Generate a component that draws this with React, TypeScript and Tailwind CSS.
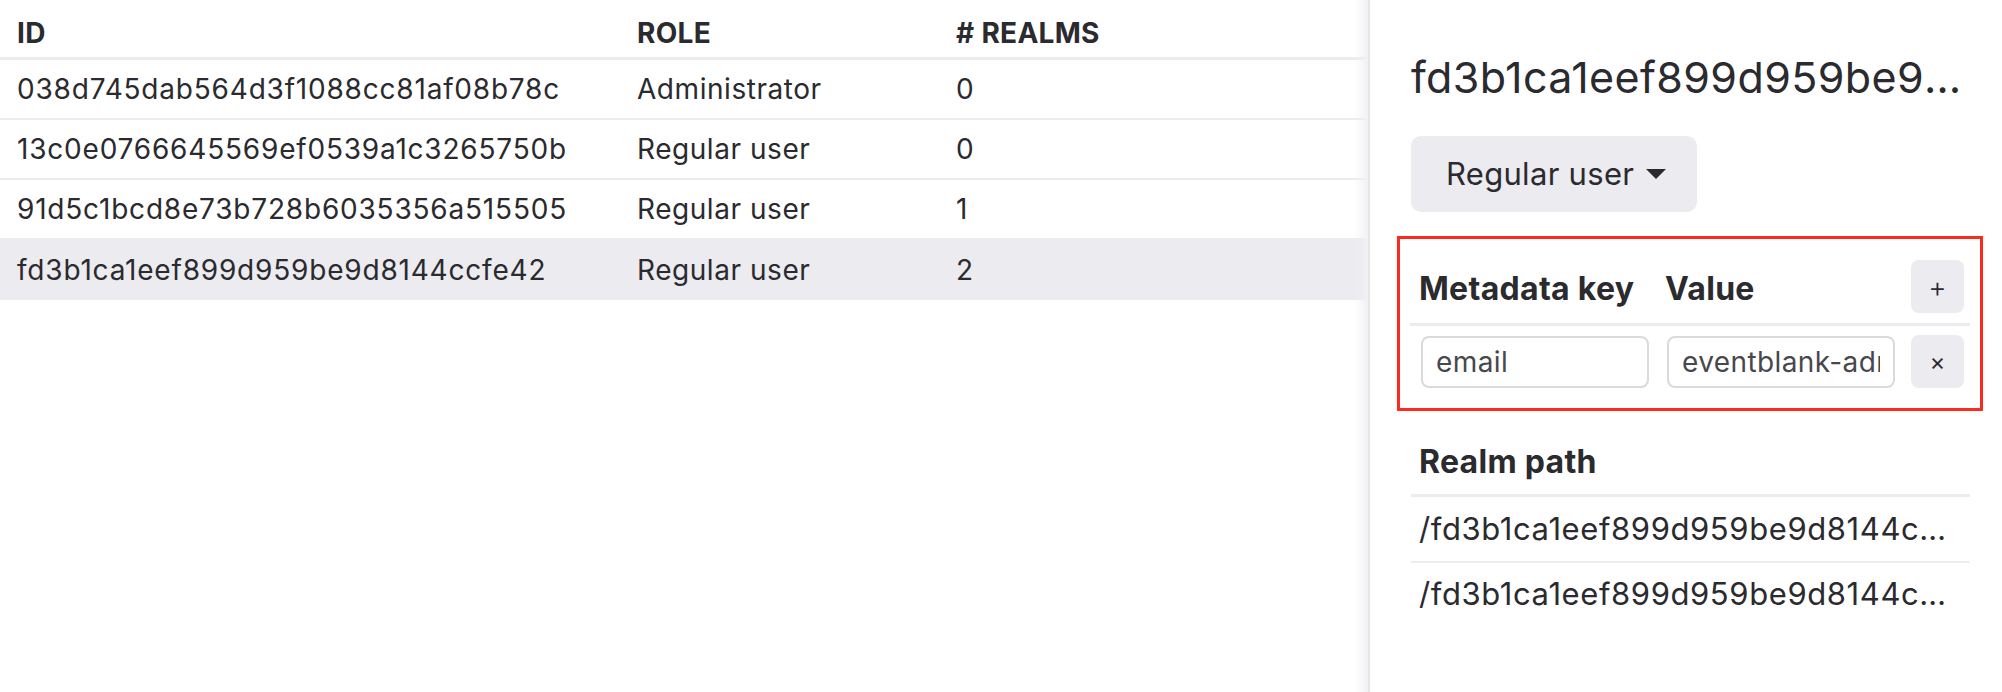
import React from "react";

const rows = [
  { id: "038d745dab564d3f1088cc81af08b78c", role: "Administrator", realms: "0" },
  { id: "13c0e0766645569ef0539a1c3265750b", role: "Regular user", realms: "0" },
  { id: "91d5c1bcd8e73b728b6035356a515505", role: "Regular user", realms: "1" },
  { id: "fd3b1ca1eef899d959be9d8144ccfe42", role: "Regular user", realms: "2", selected: true },
];

export default function App() {
  return (
    <div
      className="flex h-[692px] w-[2002px] bg-white text-[#2a2a2f] overflow-hidden"
      style={{ fontFamily: "Inter, 'Noto Sans', sans-serif" }}
    >
      {/* Left table */}
      <div className="relative w-[1368px] shrink-0">
        <div className="grid h-[60px] grid-cols-[637px_319px_1fr] items-end border-b-[3px] border-[#ebebf0] pb-[7px] text-[28px] leading-[34px] font-bold tracking-[0.3px]">
          <div className="pl-[17px]">ID</div>
          <div>ROLE</div>
          <div>#&nbsp;REALMS</div>
        </div>
        {rows.map((r) => (
          <div
            key={r.id}
            className={
              "grid h-[60px] grid-cols-[637px_319px_1fr] items-center text-[28px] " +
              (r.selected ? "bg-[#ebebf0]" : "border-b-2 border-[#ebebf0]")
            }
          >
            <div className="pl-[17px] tracking-[0.8px]">{r.id}</div>
            <div className="tracking-[0.55px]">{r.role}</div>
            <div>{r.realms}</div>
          </div>
        ))}
        <div className="absolute right-0 top-0 h-full w-[14px] bg-gradient-to-r from-transparent to-[#f1f1f4]" />
      </div>
      <div className="w-[2px] shrink-0 bg-[#e6e6ea]" />

      {/* Right panel */}
      <div className="min-w-0 flex-1 pl-[41px] pt-[51px]">
        <div className="w-[559px] truncate text-[43px] leading-[52px] tracking-[0.4px]">
          fd3b1ca1eef899d959be9d8144ccfe42
        </div>
        <button className="mt-[33px] flex h-[76px] w-[286px] items-center rounded-[10px] bg-[#ebebf0] pl-[35px] text-[31px] tracking-[0.3px]">
          Regular user
          <svg className="ml-[12px]" width="20" height="10" viewBox="0 0 20 10">
            <path d="M0 0 H20 L10 10 Z" fill="#2a2a2f" />
          </svg>
        </button>

        <div className="-ml-[14px] mt-[24px] w-[586px] border-[3px] border-[#ff2a1f] px-[10px] pb-[20px] pt-[21px]">
          <div className="grid grid-cols-[247px_246px_1fr] border-b-[3px] border-[#ebebf0] pb-[10px]">
            <div className="pl-[9px] pt-[9px] text-[32px] leading-[40px] font-bold tracking-[0.3px]">Metadata key</div>
            <div className="pl-[8px] pt-[9px] text-[32px] leading-[40px] font-bold tracking-[0.3px]">Value</div>
            <div className="flex justify-end pr-[6px]">
              <button className="flex h-[53px] w-[53px] items-center justify-center rounded-[8px] bg-[#ebebf0] text-[28px] font-light">
                +
              </button>
            </div>
          </div>
          <div className="grid grid-cols-[247px_246px_1fr] items-center pt-[9px]">
            <div className="pl-[11px] pr-[8px]">
              <input
                readOnly
                value="email"
                className="h-[52px] w-full rounded-[8px] border-2 border-[#dadadd] bg-white px-[13px] text-[28px] tracking-[0.4px] text-[#47474d] outline-none"
              />
            </div>
            <div className="pl-[10px] pr-[8px]">
              <input
                readOnly
                value="eventblank-admin@example.com"
                className="h-[52px] w-full rounded-[8px] border-2 border-[#dadadd] bg-white px-[13px] text-[28px] tracking-[0.4px] text-[#47474d] outline-none"
              />
            </div>
            <div className="flex justify-end pr-[6px]">
              <button className="flex h-[53px] w-[53px] items-center justify-center rounded-[8px] bg-[#ebebf0] text-[24px]">
                ×
              </button>
            </div>
          </div>
        </div>

        <div className="mt-[31px] w-[559px]">
          <div className="border-b-[3px] border-[#ebebf0] pb-[12px] pl-[8px] text-[32px] leading-[40px] font-bold tracking-[0.3px]">
            Realm path
          </div>
          <div className="flex h-[66px] items-center border-b-2 border-[#ebebf0] pl-[8px] text-[31px] tracking-[0.6px]">
            <span className="w-[533px] truncate">/fd3b1ca1eef899d959be9d8144ccfe42/realm-one</span>
          </div>
          <div className="flex h-[62px] items-center pl-[8px] text-[31px] tracking-[0.6px]">
            <span className="w-[533px] truncate">/fd3b1ca1eef899d959be9d8144ccfe42/realm-two</span>
          </div>
        </div>
      </div>
    </div>
  );
}
